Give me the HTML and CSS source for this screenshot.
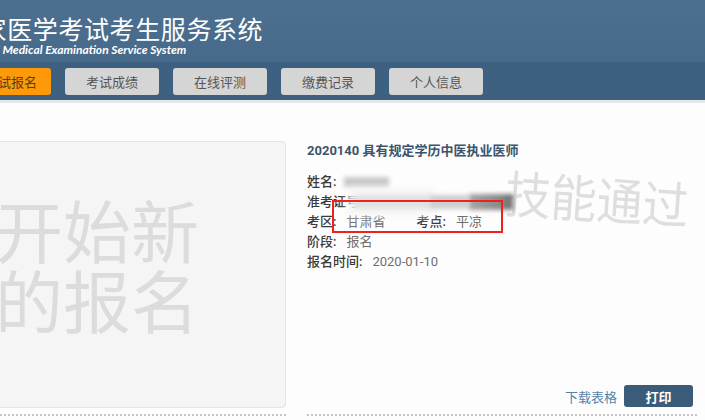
FILE: index.html
```html
<!doctype html>
<html lang="zh-CN">
  <head>
    <meta charset="utf-8" />
    <title>国家医学考试考生服务系统</title>
    <link rel="stylesheet" href="styles.css">
  </head>
  <body>
    <!-- Header -->
    <div class="header">
      <div class="brand">
        <h1 class="brandTitle">国家医学考试考生服务系统</h1>
        <p class="brandSub">National Medical Examination Service System</p>
      </div>
    </div>

    <!-- Main navigation -->
    <div class="nav">
      <a class="navBtn active" href="#">考试报名</a>
      <a class="navBtn" href="#">考试成绩</a>
      <a class="navBtn" href="#">在线评测</a>
      <a class="navBtn" href="#">缴费记录</a>
      <a class="navBtn" href="#">个人信息</a>
    </div>

    <div class="main">
      <div class="colLeft">
        <div class="newCard">
          <div class="newText">开始新<br>的报名</div>
        </div>
        <div class="dots"></div>
      </div>

      <div class="colRight">
        <div class="record">
          <h2 class="recordTitle">2020140 具有规定学历中医执业医师</h2>
          <div class="stamp">技能通过</div>
          <ul class="info">
            <li><span class="label">姓名:</span><span class="blur blurName"></span></li>
            <li><span class="label">准考证号:</span><span class="blur blurNo"></span><span class="blur blurNoMid"></span><span class="blur blurNoDark"></span></li>
            <li><span class="label">考区:</span><span class="value">甘肃省</span><span class="label second">考点:</span><span class="value">平凉</span></li>
            <li><span class="label">阶段:</span><span class="value">报名</span></li>
            <li><span class="label">报名时间:</span><span class="value">2020-01-10</span></li>
          </ul>
          <div class="mark"></div>
          <div class="actions">
            <a class="download" href="#">下载表格</a>
            <button class="printBtn">打印</button>
          </div>
        </div>
        <div class="dots"></div>
      </div>
    </div>
  </body>
</html>
```

FILE: styles.css
```css
* {
  box-sizing: border-box;
}
body {
  margin: 0;
  width: 705px;
  height: 420px;
  overflow: hidden;
  background: #fdfdfd;
  font-family: Roboto, "Noto Sans CJK SC", sans-serif;
  font-size: 13px;
  color: #444;
}
/* Header */
.header {
  height: 62px;
  background: linear-gradient(#4d7090, #476a8a);
  overflow: hidden;
}
.brand {
  margin-left: -44px;
  padding-top: 13px;
  color: #fff;
}
.brandTitle {
  margin: 0;
  font-family: "Noto Sans CJK SC", sans-serif;
  font-weight: normal;
  font-size: 25px;
  line-height: 30px;
  letter-spacing: 0.6px;
  white-space: nowrap;
}
.brandSub {
  margin: 0;
  font-family: Lato, "Liberation Sans", sans-serif;
  font-style: italic;
  font-weight: bold;
  font-size: 12px;
  line-height: 14px;
  white-space: nowrap;
}
/* Nav */
.nav {
  display: flex;
  gap: 14px;
  height: 41px;
  padding-top: 6px;
  background: #3e6080;
  border-bottom: 3px solid #e3e7ea;
}
.navBtn {
  display: block;
  width: 94px;
  height: 27px;
  line-height: 27px;
  text-align: center;
  background: #d5d5d5;
  color: #555;
  border-radius: 3px;
  text-decoration: none;
  font-family: "Noto Sans CJK SC", sans-serif;
  font-size: 13px;
}
.navBtn.active {
  width: 80px;
  margin-left: -29px;
  background: #fe9a0a;
  color: #5a3f14;
}
/* Main */
.main {
  display: flex;
  gap: 21px;
  padding-top: 38px;
}
.colLeft {
  width: 346px;
  margin-left: -60px;
  flex-shrink: 0;
}
.newCard {
  height: 267px;
  padding: 52px 0 0 54px;
  background: #f5f5f5;
  border: 1px solid #e4e4e4;
  border-radius: 4px;
}
.newText {
  font-family: "Noto Sans CJK SC", sans-serif;
  font-size: 68px;
  line-height: 70px;
  color: #dcdcdc;
  white-space: nowrap;
}
.dots {
  margin-top: 6px;
  border-top: 2px dotted #c6c6c6;
}
.colRight {
  width: 390px;
  flex-shrink: 0;
}
.record {
  position: relative;
  height: 267px;
  display: flex;
  flex-direction: column;
  padding-bottom: 1px;
}
.recordTitle {
  margin: 0;
  font-size: 13px;
  line-height: 20px;
  font-weight: bold;
  color: #3b546d;
}
.info {
  list-style: none;
  margin: 11px 0 0;
  padding: 0;
  position: relative;
}
.info li {
  display: flex;
  align-items: center;
  height: 20px;
  line-height: 20px;
}
.label {
  color: #3a3a3a;
  font-weight: 500;
}
.label.second {
  margin-left: 31px;
}
.value {
  margin-left: 10px;
  color: #6e6e6e;
}
.blur {
  display: inline-block;
  filter: blur(2px);
}
.blurName {
  width: 45px;
  height: 10px;
  margin-left: 8px;
  background: #c8c8c8;
}
.blurNo {
  width: 75px;
  height: 14px;
  margin-left: -8px;
  background: #e2e2e2;
  box-shadow: 0 0 8px 6px #f4f4f4;
}
.blurNoMid {
  width: 40px;
  height: 14px;
  background: #cfcfcf;
}
.blurNoDark {
  width: 44px;
  height: 16px;
  background: linear-gradient(90deg, #a5a5a5, #8a8a8a 70%, #6f6f6f);
}
/* Red highlight box */
.mark {
  position: absolute;
  left: 25px;
  top: 59px;
  width: 171px;
  height: 33px;
  border: 2px solid #f0201c;
}
.stamp {
  position: absolute;
  left: 200px;
  top: 24px;
  font-family: "Noto Sans CJK SC", sans-serif;
  font-size: 46px;
  line-height: 46px;
  color: #dedede;
  white-space: nowrap;
  transform: rotate(4deg) scaleY(1.1);
  transform-origin: left top;
}
.actions {
  margin-top: auto;
  display: flex;
  justify-content: flex-end;
  align-items: center;
  gap: 7px;
  padding-right: 4px;
}
.download {
  color: #5583a8;
  text-decoration: none;
  font-family: "Noto Sans CJK SC", sans-serif;
  font-size: 13px;
}
.printBtn {
  width: 69px;
  height: 22px;
  border: none;
  border-radius: 3px;
  background: #3a5b7a;
  color: #fff;
  font-family: "Noto Sans CJK SC", sans-serif;
  font-size: 13px;
  font-weight: bold;
  cursor: pointer;
}
```
